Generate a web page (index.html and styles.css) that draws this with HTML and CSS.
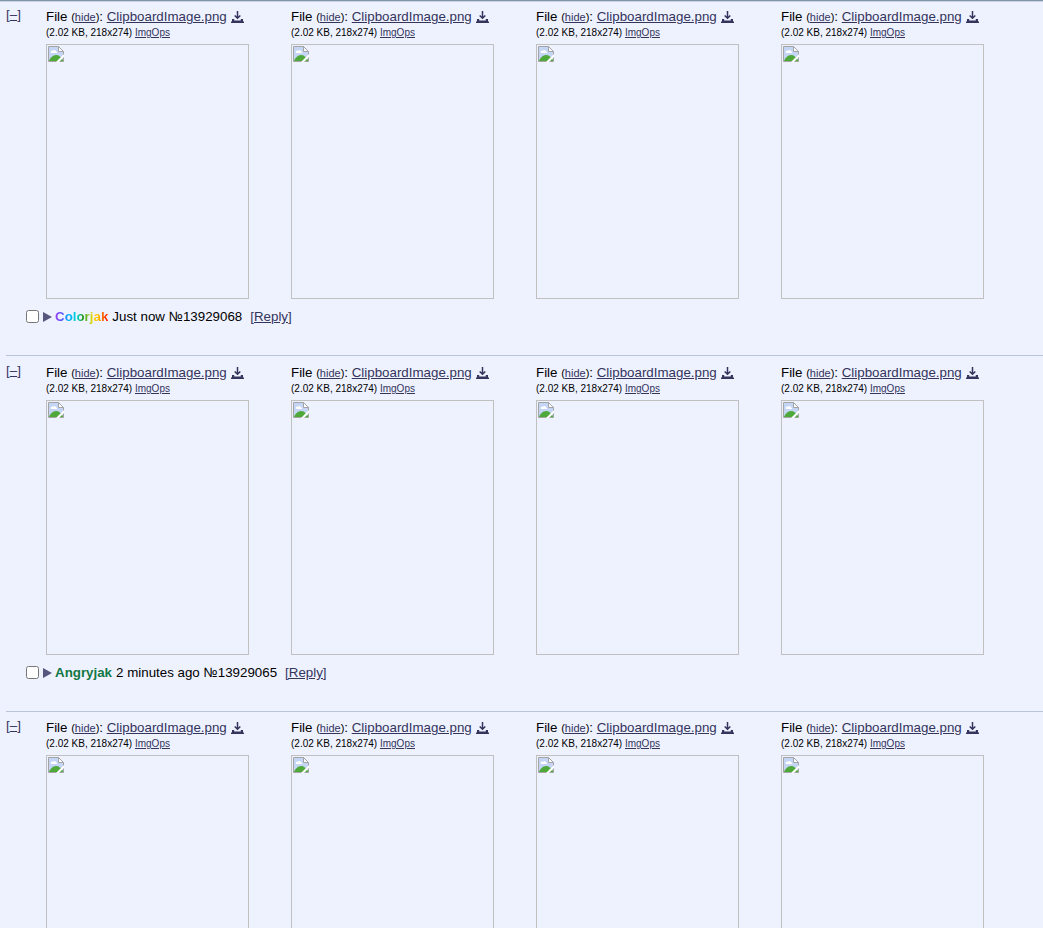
FILE: index.html
```html
<!DOCTYPE html>
<html lang="en">
<head>
<meta charset="utf-8">
<title>Threads</title>
<link rel="stylesheet" href="styles.css">
</head>
<body>
<svg class="defs" width="0" height="0">
  <symbol id="download" viewBox="0 0 13 13">
    <path d="M1 8h2.200v1.500h6.600V8H12v2.500h1V12H0v-1.500h1z" fill="currentColor"/>
    <path d="M6.500 0v7M3.700 4.500l2.800 2.800 2.800-2.800" fill="none" stroke="currentColor" stroke-width="1.500"/>
  </symbol>
  <symbol id="broken" viewBox="0 0 16 16">
    <path d="M.5 .5h10l5 5v10H.5z" fill="#c4d5f5"/>
    <path d="M3 7c-1-2 1-3 2-2 1-2 3-1 3 .5 1.500 0 1.500 1.500 .5 1.500z" fill="#fff"/>
    <path d="M1 15c1-3 4-6 7-6s5 2 7 5v1z" fill="#4ea83a"/>
    <path d="M8 16l8-8v3l-5 5z" fill="#fff"/>
    <path d="M.5 15.500V.5h10l5 5V8.500M.5 15.500H8.500M11.500 15.500h4V11.500" fill="none" stroke="#a4a4a4"/>
    <path d="M10.500 .5v5h5z" fill="#fff" stroke="#a4a4a4"/>
  </symbol>
</svg>
<main class="board">
  <section class="thread">
    <a class="toggle">[<u>–</u>]</a>
    <div class="files">
      <div class="file"><p class="name">File <small>(<a>hide</a>)</small>: <a class="link">ClipboardImage.png</a><svg class="dl"><use href="#download"/></svg></p><p class="meta">(2.02 KB, 218x274) <a>ImgOps</a></p><div class="thumb"><svg><use href="#broken"/></svg></div></div>
      <div class="file"><p class="name">File <small>(<a>hide</a>)</small>: <a class="link">ClipboardImage.png</a><svg class="dl"><use href="#download"/></svg></p><p class="meta">(2.02 KB, 218x274) <a>ImgOps</a></p><div class="thumb"><svg><use href="#broken"/></svg></div></div>
      <div class="file"><p class="name">File <small>(<a>hide</a>)</small>: <a class="link">ClipboardImage.png</a><svg class="dl"><use href="#download"/></svg></p><p class="meta">(2.02 KB, 218x274) <a>ImgOps</a></p><div class="thumb"><svg><use href="#broken"/></svg></div></div>
      <div class="file"><p class="name">File <small>(<a>hide</a>)</small>: <a class="link">ClipboardImage.png</a><svg class="dl"><use href="#download"/></svg></p><p class="meta">(2.02 KB, 218x274) <a>ImgOps</a></p><div class="thumb"><svg><use href="#broken"/></svg></div></div>
    </div>
    <div class="intro"><input type="checkbox"><svg class="arrow" viewBox="0 0 9 10"><path d="M0 0l9 5-9 5z"/></svg><b class="poster rainbow">Colorjak</b><span class="when">Just now №13929068</span><a class="reply">[Reply]</a></div>
  </section>
  <section class="thread">
    <a class="toggle">[<u>–</u>]</a>
    <div class="files">
      <div class="file"><p class="name">File <small>(<a>hide</a>)</small>: <a class="link">ClipboardImage.png</a><svg class="dl"><use href="#download"/></svg></p><p class="meta">(2.02 KB, 218x274) <a>ImgOps</a></p><div class="thumb"><svg><use href="#broken"/></svg></div></div>
      <div class="file"><p class="name">File <small>(<a>hide</a>)</small>: <a class="link">ClipboardImage.png</a><svg class="dl"><use href="#download"/></svg></p><p class="meta">(2.02 KB, 218x274) <a>ImgOps</a></p><div class="thumb"><svg><use href="#broken"/></svg></div></div>
      <div class="file"><p class="name">File <small>(<a>hide</a>)</small>: <a class="link">ClipboardImage.png</a><svg class="dl"><use href="#download"/></svg></p><p class="meta">(2.02 KB, 218x274) <a>ImgOps</a></p><div class="thumb"><svg><use href="#broken"/></svg></div></div>
      <div class="file"><p class="name">File <small>(<a>hide</a>)</small>: <a class="link">ClipboardImage.png</a><svg class="dl"><use href="#download"/></svg></p><p class="meta">(2.02 KB, 218x274) <a>ImgOps</a></p><div class="thumb"><svg><use href="#broken"/></svg></div></div>
    </div>
    <div class="intro"><input type="checkbox"><svg class="arrow" viewBox="0 0 9 10"><path d="M0 0l9 5-9 5z"/></svg><b class="poster">Angryjak</b><span class="when">2 minutes ago №13929065</span><a class="reply">[Reply]</a></div>
  </section>
  <section class="thread last">
    <a class="toggle">[<u>–</u>]</a>
    <div class="files">
      <div class="file"><p class="name">File <small>(<a>hide</a>)</small>: <a class="link">ClipboardImage.png</a><svg class="dl"><use href="#download"/></svg></p><p class="meta">(2.02 KB, 218x274) <a>ImgOps</a></p><div class="thumb"><svg><use href="#broken"/></svg></div></div>
      <div class="file"><p class="name">File <small>(<a>hide</a>)</small>: <a class="link">ClipboardImage.png</a><svg class="dl"><use href="#download"/></svg></p><p class="meta">(2.02 KB, 218x274) <a>ImgOps</a></p><div class="thumb"><svg><use href="#broken"/></svg></div></div>
      <div class="file"><p class="name">File <small>(<a>hide</a>)</small>: <a class="link">ClipboardImage.png</a><svg class="dl"><use href="#download"/></svg></p><p class="meta">(2.02 KB, 218x274) <a>ImgOps</a></p><div class="thumb"><svg><use href="#broken"/></svg></div></div>
      <div class="file"><p class="name">File <small>(<a>hide</a>)</small>: <a class="link">ClipboardImage.png</a><svg class="dl"><use href="#download"/></svg></p><p class="meta">(2.02 KB, 218x274) <a>ImgOps</a></p><div class="thumb"><svg><use href="#broken"/></svg></div></div>
    </div>
  </section>
</main>
</body>
</html>
```
FILE: styles.css
```css
* { box-sizing: border-box; }
body {
  margin: 0;
  background: #eef2ff;
  color: #000;
  font: 13.333px/16px "Liberation Sans", Arial, sans-serif;
  border-top: 1px solid #8395a9;
}
.defs { display: none; }
p { margin: 0; white-space: nowrap; }
a { color: #34345c; text-decoration: underline; }
.board { padding-left: 6px; box-shadow: inset 0 1px #c9d3e2; }
.thread {
  display: grid;
  grid-template-columns: 40px 1fr;
  grid-template-rows: 298px 49px;
  height: 354px;
  padding-top: 7px;
}
.thread + .thread {
  height: 356px;
  padding-top: 8px;
  border-top: 1px solid #b7c5d9;
}
.thread + .thread.last {
  grid-template-rows: 209px;
  height: 217px;
  padding-top: 7px;
}
.thread .toggle { text-decoration: none; line-height: 14px; }
.files { display: flex; gap: 42px; }
.file { width: 203px; }
.name { height: 17px; line-height: 17px; }
.name small { font-size: 11px; }
.dl { width: 13px; height: 13px; margin-left: 4px; color: #34345c; vertical-align: -3px; }
.meta { height: 19px; font-size: 10px; line-height: 15px; }
.thumb { width: 203px; height: 255px; border: 1px solid #c0c0c0; padding: 1px; }
.last .thumb { height: 173px; border-bottom: 0; }
.thumb svg { display: block; width: 16px; height: 16px; }
.intro {
  grid-column: 1 / -1;
  display: flex;
  align-items: center;
  height: 21px;
  padding-left: 20px;
  white-space: nowrap;
}
.intro input { width: 13px; height: 13px; margin: 0 4px 0 0; }
.intro .poster, .intro span, .intro a { padding-top: 1px; }
.arrow { width: 9px; height: 10px; margin-right: 3px; fill: #56567e; }
.poster { color: #117743; }
.rainbow {
  background: linear-gradient(90deg, #a040f0 0, #5050ff 14%, #00a8ff 24%, #00d8d0 42%, #209820 52%, #80c020 62%, #ffe000 72%, #ffb000 84%, #ff3000 95%);
  -webkit-background-clip: text;
  background-clip: text;
  color: transparent;
}
.when { margin-left: 4px; }
.reply { margin-left: 8px; }
```
